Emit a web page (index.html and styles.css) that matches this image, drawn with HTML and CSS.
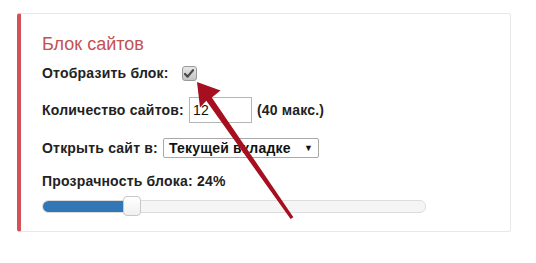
FILE: index.html
```html
<!DOCTYPE html>
<html lang="ru">
<head>
<meta charset="utf-8">
<link rel="stylesheet" href="styles.css">
</head>
<body>
<div class="card">
  <div class="title">Блок сайтов</div>
  <div class="row row-check">
    <span class="label">Отобразить блок:</span>
    <span class="checkbox">
      <svg width="10" height="9" viewBox="0 0 10 9"><path d="M1 5 L3.6 7.6 L9 1.2" fill="none" stroke="#4a4a4a" stroke-width="2.2" stroke-linecap="round" stroke-linejoin="round"/></svg>
    </span>
  </div>
  <div class="row row-count">
    <span class="label">Количество сайтов:</span>
    <span class="input">12</span>
    <span class="label">(40 макс.)</span>
  </div>
  <div class="row row-open">
    <span class="label">Открыть сайт в:</span>
    <span class="select"><span>Текущей вкладке</span><span class="caret">▼</span></span>
  </div>
  <div class="row row-opacity">
    <span class="label">Прозрачность блока: 24%</span>
  </div>
  <div class="slider">
    <div class="fill" style="width: 84px"></div>
    <div class="handle"></div>
  </div>
</div>
<svg class="arrow" width="536" height="263" viewBox="0 0 536 263">
  <polygon fill="#a50f1f" points="197,82 220.5,90.5 211.8,97.4 293.4,217.2 290.6,219 206.3,100.8 200,107.5"/>
</svg>
</body>
</html>
```
FILE: styles.css
```css
html, body {
  margin: 0;
  padding: 0;
  background: #fff;
}
body {
  width: 536px;
  height: 263px;
  position: relative;
  overflow: hidden;
  font-family: "Liberation Sans", Arial, sans-serif;
  color: #222;
}
.card {
  margin: 13px 0 0 17px;
  width: 468px;
  height: 217px;
  border: 1px solid #e8e8e8;
  border-left: 4px solid #d2525b;
  border-radius: 3px;
  padding: 0 0 0 21px;
}
.title {
  color: #c4504f;
  font-size: 18px;
  line-height: 20px;
  margin-top: 20px;
}
.row {
  display: flex;
  align-items: center;
  font-size: 14px;
  font-weight: bold;
  letter-spacing: 0.2px;
}
.label {
  white-space: nowrap;
}
.row-check {
  margin-top: 11px;
  height: 16px;
}
.checkbox {
  margin-left: 13px;
  width: 13px;
  height: 13px;
  border: 1px solid #9a9a9a;
  border-radius: 3px;
  background: linear-gradient(#e6e6e6, #c4c4c4);
  display: flex;
  align-items: center;
  justify-content: center;
}
.row-count {
  margin-top: 16px;
  height: 26px;
  gap: 5px;
}
.input {
  width: 58px;
  height: 24px;
  border: 1px solid #b5b5b5;
  padding-left: 3px;
  font-weight: normal;
  color: #111;
  font-size: 14px;
  display: flex;
  align-items: center;
}
.row-open {
  margin-top: 15px;
  height: 20px;
  gap: 5px;
}
.select {
  width: 144px;
  height: 18px;
  border: 1px solid #a9a9a9;
  border-radius: 2px;
  padding: 0 5px 0 5px;
  display: flex;
  align-items: center;
  justify-content: space-between;
  color: #111;
}
.caret {
  font-size: 9px;
}
.row-opacity {
  margin-top: 15px;
  height: 16px;
}
.slider {
  margin-top: 11px;
  position: relative;
  width: 382px;
  height: 11px;
  border: 1px solid #ddd;
  border-radius: 6px;
  background: #f5f5f5;
}
.fill {
  height: 11px;
  background: #3176b5;
  border-radius: 6px 0 0 6px;
}
.handle {
  position: absolute;
  left: 80px;
  top: -5px;
  width: 16px;
  height: 18px;
  border: 1px solid #c8c8c8;
  border-radius: 4px;
  background: linear-gradient(#fff, #f0f0f0);
}
.arrow {
  position: absolute;
  left: 0;
  top: 0;
  pointer-events: none;
}
```
